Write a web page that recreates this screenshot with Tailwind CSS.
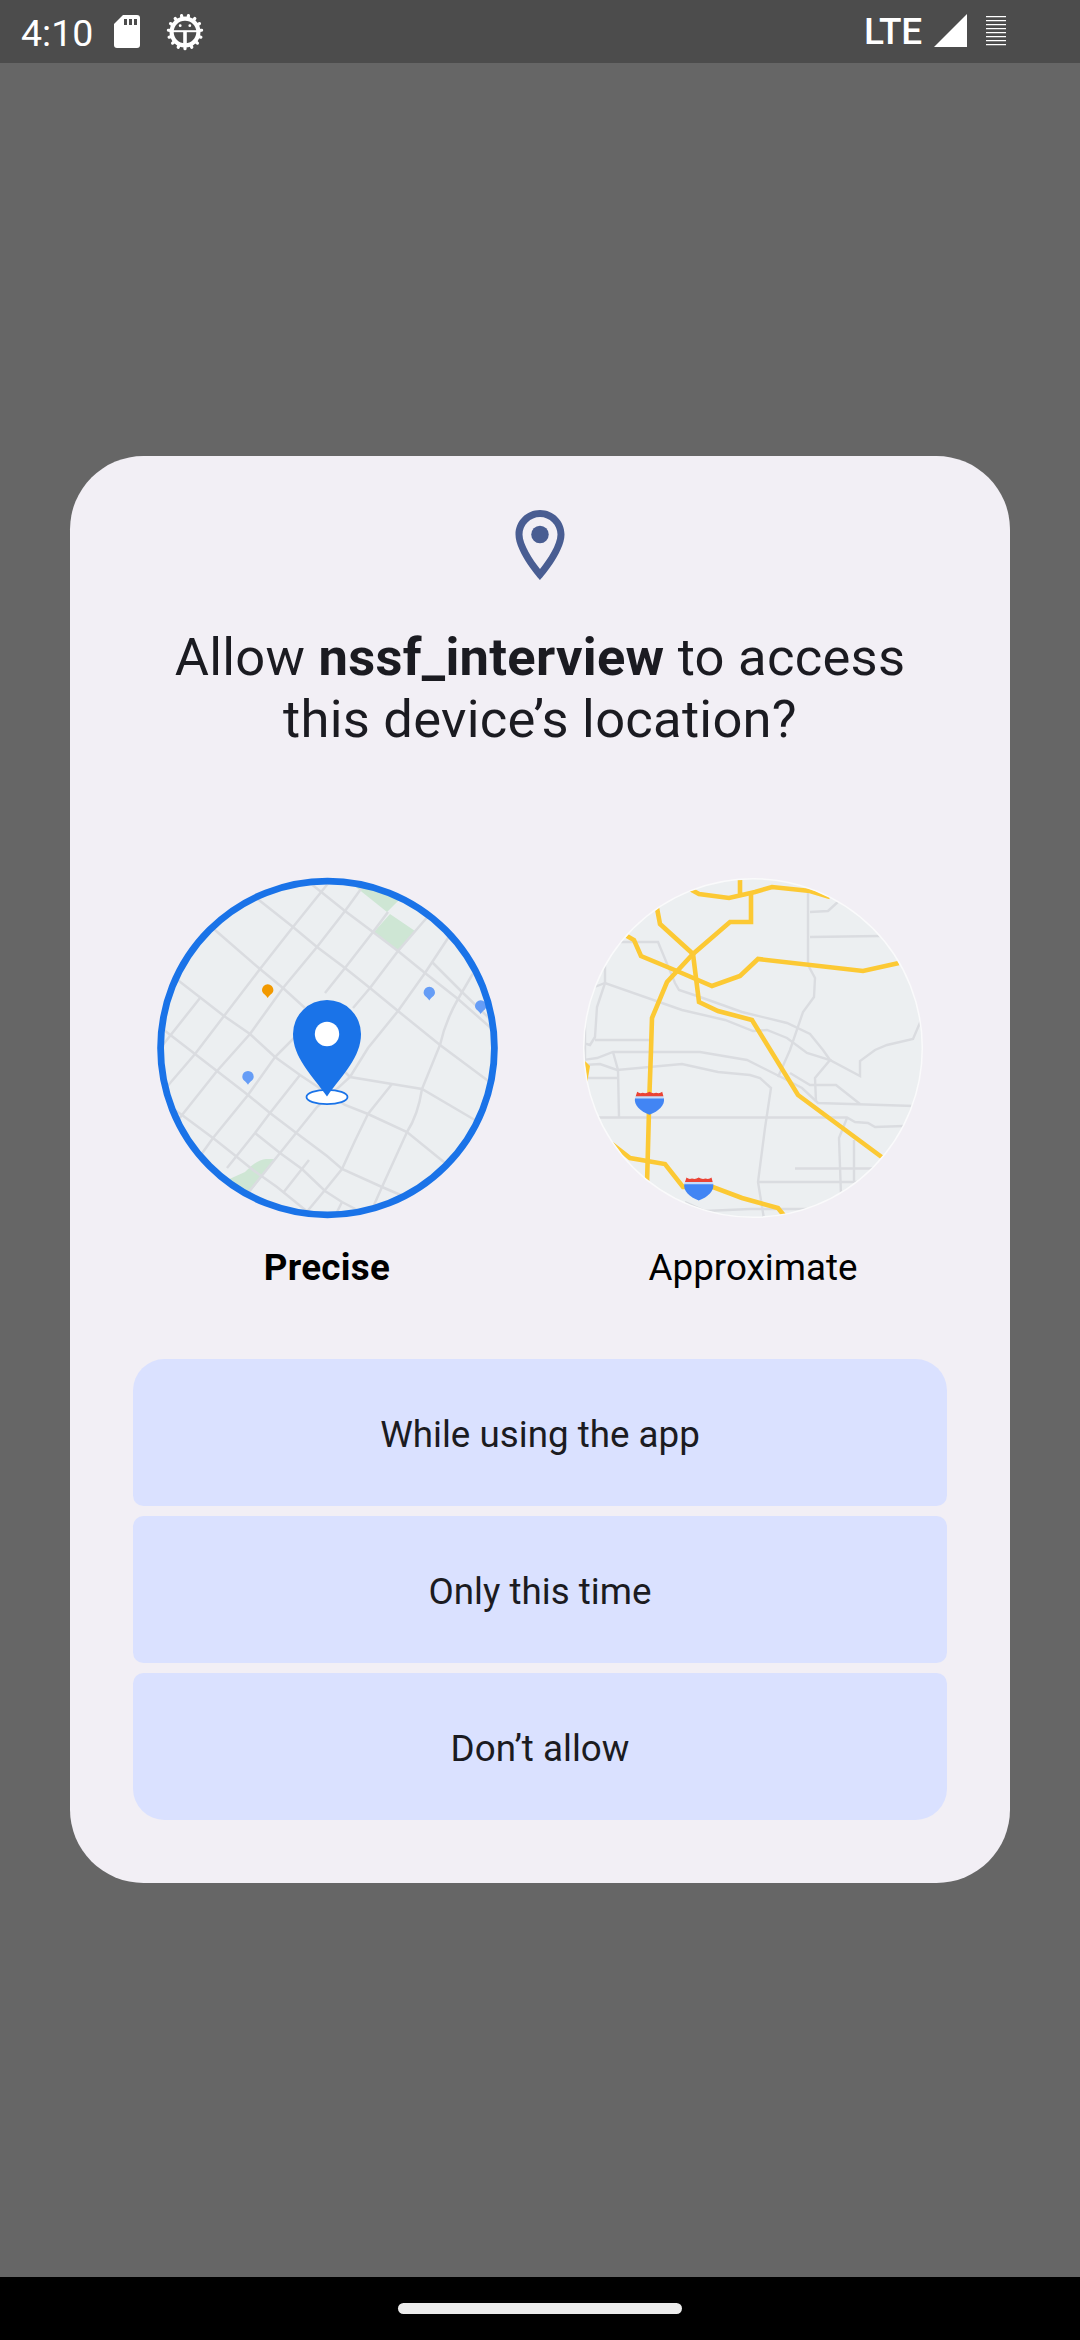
<!DOCTYPE html>
<html lang="en">
<head>
<meta charset="utf-8">
<title>Location permission</title>
<script src="https://cdn.jsdelivr.net/npm/@tailwindcss/browser@4"></script>
</head>
<body class="flex h-[2340px] w-[1080px] flex-col overflow-hidden bg-[#666666] font-[Roboto,sans-serif]">
  <!-- Status bar -->
  <header class="flex h-[63px] shrink-0 items-start bg-[#4c4c4c] text-white">
    <span class="ml-[21px] mt-[11px] w-[71px] text-[37.5px] leading-[44px]">4:10</span>
    <svg class="ml-[22px] mt-[15px] h-[33px] w-[26px]" viewBox="0 0 26 33"><path fill="#fff" d="M9 0h14a3 3 0 0 1 3 3v27a3 3 0 0 1-3 3H3a3 3 0 0 1-3-3V9z"/><path fill="#4c4c4c" d="M10 4h3v6h-3zM15 4h3v6h-3zM20 4h3v6h-3z"/></svg>
    <svg class="ml-[26px] mt-3 h-[40px] w-[38px]" viewBox="-19 -20 38 40" fill="none" stroke="#fff">
      <circle r="13.400" stroke-width="4.200"/>
      <g stroke-width="3.2" stroke-linecap="round" transform="rotate(180)">
        <path id="tooth" d="M0-14.500V-16.700"/>
        <g id="teeth"></g>
      </g>
      <path stroke-width="2" d="M-13-.8H13"/>
      <path stroke-width="3.600" d="M0-1V14"/>
      <circle cx="-4.800" cy="-6.300" r="1.400" fill="#fff" stroke="none"/><circle cx="4.800" cy="-6.300" r="1.400" fill="#fff" stroke="none"/>
    </svg>
    <span class="ml-auto mt-[10px] w-[64px] whitespace-nowrap text-[37px] font-medium leading-[44px] tracking-[-0.4px]">LTE</span>
    <svg class="ml-[6px] mt-[14px] h-[33px] w-[33px]" viewBox="0 0 33 33"><path fill="#fff" d="M0 33 33 0V33z"/></svg>
    <svg class="ml-[19px] mr-[74px] mt-[16px] h-[31px] w-[20px]" viewBox="0 0 20 31" shape-rendering="crispEdges"><path stroke="#fff" d="M0 .5H20M0 4.500H20M0 8.500H20M0 12.500H20M0 16.500H20M0 20.500H20M0 24.500H20M0 28.500H20"/><path stroke="#777" d="M0 1.500H20M0 5.500H20M0 9.500H20M0 13.500H20M0 17.500H20M0 21.500H20M0 25.500H20M0 29.500H20"/></svg>
  </header>

  <!-- Permission dialog -->
  <main class="mx-[70px] mt-[393px] flex h-[1427px] shrink-0 flex-col items-center rounded-[73.5px] bg-[#f2eff5] px-[63px] pt-[47px]">
    <svg class="h-[84px] w-[84px] shrink-0" viewBox="0 0 24 24" fill="#495d92"><path fill-rule="evenodd" d="M12 2C8.13 2 5 5.13 5 9c0 5.25 7 13 7 13s7-7.75 7-13c0-3.87-3.13-7-7-7zM7 9c0-2.76 2.24-5 5-5s5 2.24 5 5c0 2.88-2.88 7.19-5 9.88C9.92 16.21 7 11.85 7 9z"/><circle cx="12" cy="9" r="2.5"/></svg>
    <h1 class="mt-[39px] whitespace-nowrap text-center text-[52.5px] leading-[62px] tracking-[0.27px] text-[#1b1b21]">Allow <b class="font-bold">nssf_interview</b> to access<br>this device’s location?</h1>

    <div class="mt-[127px] flex w-full shrink-0 justify-center gap-[84px]">
      <div class="flex w-[342px] flex-col items-center">
        <svg class="h-[342px] w-[342px]" viewBox="156 877 342 342">
          <defs><clipPath id="c1"><circle cx="327.500" cy="1048" r="168"/></clipPath></defs>
          <circle cx="327.500" cy="1048" r="168" fill="#eceff1"/>
          <g clip-path="url(#c1)">
            <path fill="#cee6d4" d="M352 884 387 912 400 899 385 875zM390 914 415 931 399 951 374 932zM225 1181 245 1172Q256 1160 266 1159H275L248 1195 235 1200z"/>
            <g fill="none" stroke="#dadce0" stroke-width="2.500">
              <path d="M170 975 179 981 224 1016 250 1034 275 1057 300 1075 345 1105 368 1114 407 1132 450 1167"/>
              <path d="M205 922 215 930 260 969 283 988 305 1008M345 1072 350 1077 392 1084 422 1089 480 1123"/>
              <path d="M250 893 293 927 317 947 345 968 370 988 398 1011 440 1045 495 1086"/>
              <path d="M305 879 345 911 373 932 398 951 425 973 458 999 500 1036M432 962 462 992 490 1019"/>
              <path d="M160 1027 195 1054 248 1095 270 1113 295 1132 327 1156 342 1169 382 1187 410 1199"/>
              <path d="M172 1108 182 1115 213 1138 237 1157 253 1170 277 1187 309 1213"/>
              <path d="M255 1133 280 1153 302 1169 325 1191 342 1202 365 1214"/>
              <path d="M330 881 293 927 260 969 224 1016 195 1054 165 1089M200 998 162 1046"/>
              <path d="M366 882 345 911 317 947 283 988 250 1034 217 1071 182 1115 175 1124"/>
              <path d="M388 912 373 932 345 968 325 993M297 1035 275 1057 248 1095 213 1138 198 1159"/>
              <path d="M430 914 398 951 370 988 353 1008M300 1075 270 1113 255 1133 227 1168"/>
              <path d="M452 932 425 973 398 1011 368 1048 350 1077 317 1107 280 1153 248 1193"/>
              <path d="M475 970 458 999 Q445 1022 440 1045L422 1089Q418 1115 407 1132L382 1187 370 1214"/>
              <path d="M392 1084 368 1114Q355 1140 342 1169L325 1190 305 1214M309 1160 283 1193M342 1202 336 1214"/>
            </g>
            <defs><path id="poi" d="M0-5.800A5.700 5.700 0 0 1 5.700 0C5.700 3.500 2 4.500 0 8-2 4.500-5.700 3.500-5.700 0A5.700 5.700 0 0 1 0-5.800z"/></defs>
            <use href="#poi" x="267.700" y="990" fill="#f29900"/>
            <g fill="#669df6"><use href="#poi" x="429.300" y="992.500"/><use href="#poi" x="480.700" y="1006"/><use href="#poi" x="248" y="1076.700"/></g>
          </g>
          <ellipse cx="327" cy="1097" rx="20.500" ry="7.200" fill="#fff" stroke="#1a73e8" stroke-width="1.800"/>
          <path fill="#1a73e8" d="M327 1000A34 34 0 0 0 293 1034C293 1057 311 1074 327 1096.500C343 1074 361 1057 361 1034A34 34 0 0 0 327 1000z"/>
          <circle cx="327" cy="1034" r="12.200" fill="#fff"/>
          <circle cx="327.500" cy="1048" r="166.900" fill="none" stroke="#1a73e8" stroke-width="6.800"/>
        </svg>
        <span class="mt-[27px] text-[36.75px] font-bold leading-[44px] tracking-[0.3px] text-black">Precise</span>
      </div>
      <div class="flex w-[342px] flex-col items-center">
        <svg class="h-[342px] w-[342px]" viewBox="582 877 342 342">
          <defs><clipPath id="c2"><circle cx="753" cy="1048" r="169"/></clipPath></defs>
          <circle cx="753" cy="1048" r="169.500" fill="#eceff1"/>
          <g clip-path="url(#c2)" fill="none">
            <g stroke="#dadce0" stroke-width="2.400">
              <path d="M618 942H658L675 983 679 990 700 997 742 1012 787 1023 810 1034 823 1050 830 1060 860 1076V1061L875 1050 887 1045 913 1039 922 1018"/>
              <path d="M592 988 605 983 682 1010 725 1020 753 1031 767 1030 787 1038 807 1053 830 1060 815 1078 816 1102"/>
              <path d="M605 960V983L597 1007 595 1037 590 1045 583 1043M595 1040H650M585 1015V1060"/>
              <path d="M808 885V965L815 978 814 997 803 1012 790 1050 778 1077M810 912 828 911 840 900M810 937 880 936"/>
              <path d="M583 1060 597 1058 613 1052H700L747 1060 783 1078 802 1088 818 1103 914 1106"/>
              <path d="M583 1065 600 1064 617 1070 682 1064 718 1072 750 1075 760 1078 771 1088 765 1128 758 1182 764 1219"/>
              <path d="M613 1052 618 1070 619 1117M585 1078H618M595 1117.500H847L855 1122 868 1123 875 1127 904 1126"/>
              <path d="M847 1118 839 1138 841 1195M854 1140V1182M795 1168.500H874M758 1182H857"/>
              <path d="M685 1202 705 1211 750 1209H807M790 1073 810 1085H836L860 1104"/>
            </g>
            <g stroke="#fcc934" stroke-width="4.600">
              <path d="M620 933 627 936 634 940 641 956 677 971 712 986 740 976 758 959 863 971 899 963"/>
              <path d="M656 903 660 924 693 954 699 1002 718 1011 752 1020 798 1095 883 1158"/>
              <path d="M751 893V922H730L693 954 667 982 652 1018 651 1050 649.500 1092 647 1184"/>
              <path d="M690 889 699 894 729 898 755 892 772 887 810 891 830 897M740 877V895"/>
              <path d="M612 1144 630 1158 665 1164 683 1187H713L742 1198 778 1208 786 1218"/>
              <path fill="#fcc934" stroke="none" d="M582 1058 590 1066 587 1084 580 1080z"/>
            </g>
            <defs><g id="shield"><path fill="#4285f4" d="M.3 6.500H29.200C30.500 14 24 19.500 14.700 23.300 5.500 19.500-1 14 .3 6.500z"/><path fill="#c4dcfb" d="M1 4.500H28.500L29.200 7H.3z"/><path fill="#ea4335" d="M2.500.3Q5 2.500 8 1.300 11.500 2.500 14.700.3 18 2.500 21.500 1.300 25 2.500 27.500.3L28.700 4.800H1z"/></g></defs>
            <use href="#shield" x="634.700" y="1091.500"/><use href="#shield" x="684" y="1177.300"/>
          </g>
          <circle cx="753" cy="1048" r="169.300" fill="none" stroke="#fafafb" stroke-width="1.500"/>
        </svg>
        <span class="mt-[27px] text-[36.75px] leading-[44px] text-black">Approximate</span>
      </div>
    </div>

    <div class="mt-[69px] flex w-full shrink-0 flex-col gap-[10px] text-[36.75px] text-[#1b1b21]">
      <button class="h-[147px] rounded-t-[31.5px] rounded-b-[10.5px] bg-[#dae1ff] pt-[4px]">While using the app</button>
      <button class="h-[147px] rounded-[10.5px] bg-[#dae1ff] pt-[4px]">Only this time</button>
      <button class="h-[147px] rounded-t-[10.5px] rounded-b-[31.5px] bg-[#dae1ff] pt-[4px]">Don’t allow</button>
    </div>
  </main>

  <!-- Gesture navigation bar -->
  <footer class="mt-auto flex h-[63px] shrink-0 items-start justify-center bg-black pt-[26px]">
    <div class="h-[11px] w-[284px] rounded-full bg-[#ececec]"></div>
  </footer>
  <script>
    const teeth = document.getElementById('teeth');
    for (let i = 1; i < 15; i++) {
      const t = document.getElementById('tooth').cloneNode();
      t.removeAttribute('id');
      t.setAttribute('transform', 'rotate(' + i * 24 + ')');
      teeth.append(t);
    }
  </script>
</body>
</html>
